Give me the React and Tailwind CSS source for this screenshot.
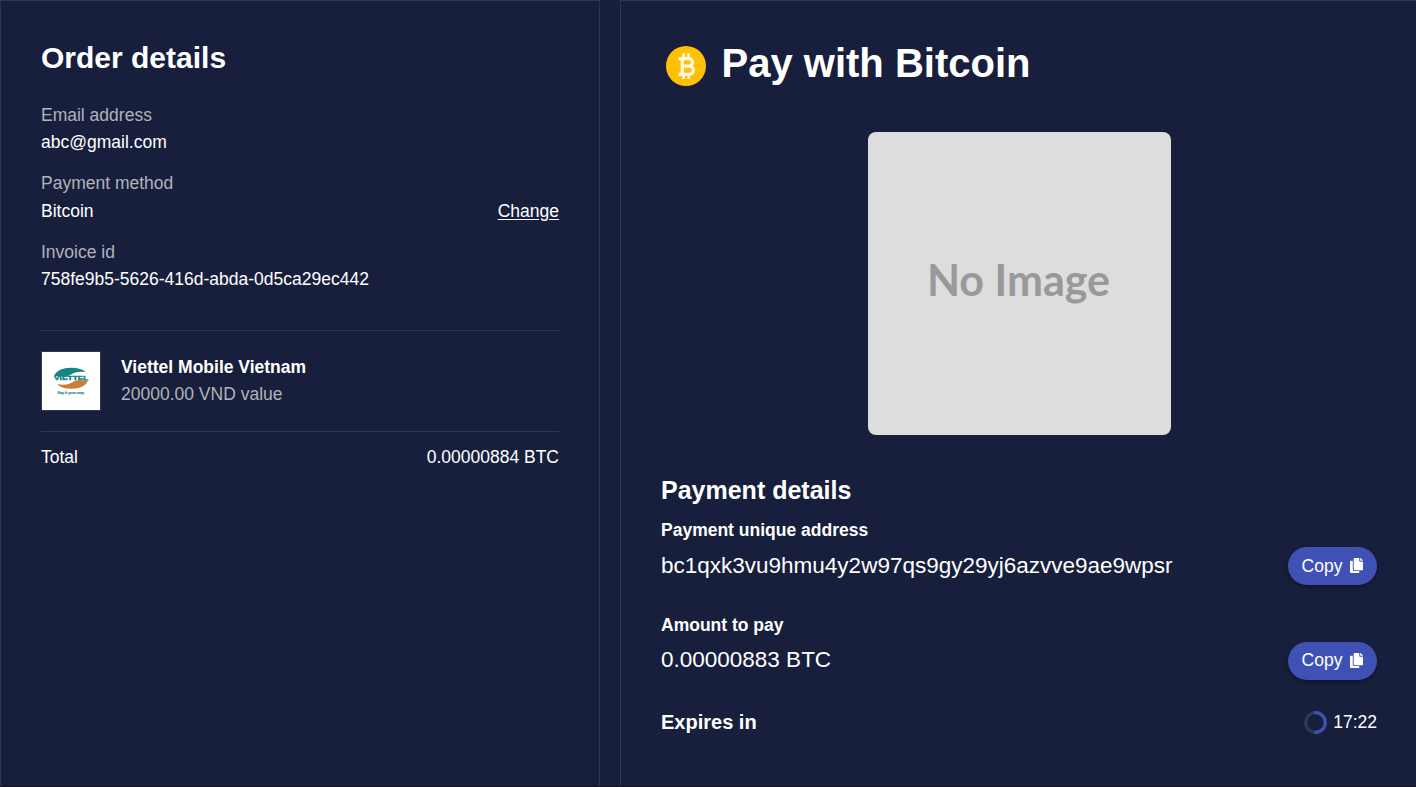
import { FaCopy } from 'react-icons/fa';

const Field = ({ label, value, action }) => (
  <div className="mb-[13.5px]">
    <div className="text-[#b1b3b9]">{label}</div>
    <div className="flex justify-between">
      <span>{value}</span>
      {action && <a className="underline underline-offset-2">{action}</a>}
    </div>
  </div>
);

const BitcoinIcon = () => (
  <svg className="size-[42px]" viewBox="0 0 42 42" fill="none">
    <circle cx="21" cy="21" r="20" fill="#ffc107" />
    <g stroke="#fff9e0" strokeWidth="3.3">
      <path d="M13.600 13.600h10.200a3.700 3.700 0 0 1 0 7.500H17M24.200 21.100a4.150 4.150 0 0 1 0 8.300H13.600M17.300 13v17" />
      <path d="M18.600 8.300v5M23.600 8.300v5M18.600 29v5M23.600 29v5" strokeWidth="2.500" />
    </g>
  </svg>
);

const ViettelLogo = () => (
  <svg className="size-[60px] border border-[#303754] bg-white" viewBox="0 0 58 58">
    <path d="M12 24.200C14 18.500 21 15.700 29 15.700c7 0 12 1.500 15 4.500-7-1-11 0-15 2.200-3 1.500-4 1.800-6 1.800Z" fill="#16857f" />
    <path d="M46 28.300c-2 5.700-8 8.400-16 8.400-7 0-12-1.500-15-4.500 7 1 11 .5 15-1.700 3-1.500 4-2.200 6-2.200Z" fill="#cc7d38" />
    <text x="12" y="28.200" textLength="34.500" lengthAdjust="spacingAndGlyphs" fill="#16857f" stroke="#16857f" strokeWidth="0.3" fontSize="5" fontWeight="700" fontFamily="Liberation Sans, sans-serif">VIETTEL</text>
    <text x="15.500" y="42" textLength="26.500" lengthAdjust="spacingAndGlyphs" fill="#308f8b" stroke="#308f8b" strokeWidth="0.2" fontSize="4" fontWeight="700" fontFamily="Liberation Sans, sans-serif">Say it your way</text>
  </svg>
);

const CopyButton = ({ labelClass }) => (
  <button className="flex h-[38px] w-[89px] items-center justify-center gap-[8px] rounded-full bg-[#3f51b5] shadow-[0_2px_4px_rgba(0,0,0,0.35)]">
    <span className={labelClass}>Copy</span>
    <FaCopy className="h-[15px] w-[13px]" />
  </button>
);

const Timer = () => (
  <svg className="size-[23px]" viewBox="0 0 23 23" fill="none" strokeWidth="3.2">
    <circle cx="11.5" cy="11.5" r="9.8" stroke="#303754" />
    <path d="M11.5 1.7a9.8 9.8 0 0 1 0 19.600" stroke="#3f51b5" strokeLinecap="round" />
  </svg>
);

export default function App() {
  return (
    <div className="flex h-[787px] gap-[20px] overflow-hidden border-b border-[#18151f] bg-[#181f3d] font-['Liberation_Sans',Arial,sans-serif] text-[17.5px] leading-[27.5px] text-white">
      <section className="w-[600px] shrink-0 border border-b-0 border-[#303754] px-[40px] pt-[38px]">
        <h1 className="mb-[24.5px] text-[30px] leading-[38px] font-bold">Order details</h1>
        <Field label="Email address" value="abc@gmail.com" />
        <Field label="Payment method" value="Bitcoin" action="Change" />
        <Field label="Invoice id" value="758fe9b5-5626-416d-abda-0d5ca29ec442" />
        <div className="mt-[36.5px] flex gap-[20px] border-y border-[#303754] py-[20px]">
          <ViettelLogo />
          <div className="pt-[2.5px]">
            <div className="font-bold">Viettel Mobile Vietnam</div>
            <div className="text-[#b1b3b9]">20000.00 VND value</div>
          </div>
        </div>
        <div className="mt-[12px] flex justify-between">
          <span>Total</span>
          <span>0.00000884 BTC</span>
        </div>
      </section>
      <section className="w-[797px] shrink-0 border-t border-l border-[#303754] px-[40px] pt-[37px]">
        <div className="flex gap-[14.5px] pl-[4px]">
          <div className="pt-[7px]"><BitcoinIcon /></div>
          <h1 className="text-[40px] leading-[50px] font-bold">Pay with Bitcoin</h1>
        </div>
        <div className="mx-auto mt-[44px] flex size-[303px] items-center justify-center rounded-[8px] bg-[#dddddd] pr-px pb-[7px] font-['Lato',sans-serif] text-[43px] font-bold text-[#999999]">
          No Image
        </div>
        <h2 className="mt-[39px] text-[25px] leading-[32px] font-bold">Payment details</h2>
        <div className="mt-[10.5px] font-bold">Payment unique address</div>
        <div className="mt-[2.5px] flex h-[38px] items-center justify-between">
          <span className="text-[22.5px]">bc1qxk3vu9hmu4y2w97qs9gy29yj6azvve9ae9wpsr</span>
          <CopyButton labelClass="pt-[2px]" />
        </div>
        <div className="mt-[27px] font-bold">Amount to pay</div>
        <div className="mt-[2.5px] flex h-[38px] items-center justify-between">
          <span className="pb-px text-[22.5px]">0.00000883 BTC</span>
          <CopyButton labelClass="pt-px" />
        </div>
        <div className="mt-[29px] flex items-center justify-between">
          <span className="text-[20px] font-bold">Expires in</span>
          <span className="flex items-center gap-[6.5px]"><Timer />17:22</span>
        </div>
      </section>
    </div>
  );
}
